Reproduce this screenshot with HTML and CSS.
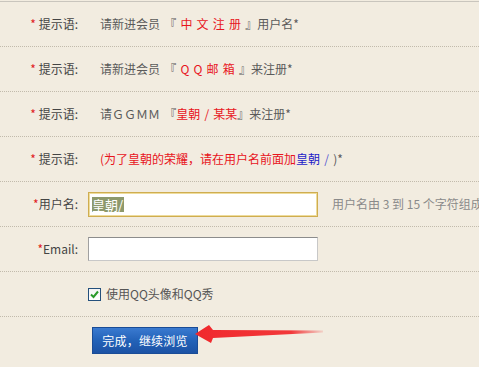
FILE: index.html
```html
<!DOCTYPE html>
<html lang="zh">
<head>
<meta charset="utf-8">
<link rel="stylesheet" href="styles.css">
</head>
<body>
<div class="page">
  <div class="topline"></div>
  <div class="form">
    <div class="row">
      <div class="label"><span class="req">*</span> 提示语:</div>
      <div class="value text">请新进会员 『 <span class="red">中 文 注 册</span> 』用户名*</div>
    </div>
    <div class="row">
      <div class="label"><span class="req">*</span> 提示语:</div>
      <div class="value text">请新进会员 『 <span class="red">Q Q 邮 箱</span> 』来注册*</div>
    </div>
    <div class="row">
      <div class="label"><span class="req">*</span> 提示语:</div>
      <div class="value text">请ＧＧＭＭ 『<span class="red">皇朝 / 某某</span>』来注册*</div>
    </div>
    <div class="row">
      <div class="label"><span class="req">*</span> 提示语:</div>
      <div class="value text"><span class="red">(为了皇朝的荣耀，请在用户名前面加</span><span class="blue">皇朝</span><span class="slash"> / </span>)*</div>
    </div>
    <div class="row">
      <div class="label"><span class="req">*</span>用户名:</div>
      <div class="value field">
        <div class="input focus"><span class="sel">皇朝/</span></div>
        <span class="hint">用户名由 3 到 15 个字符组成</span>
      </div>
    </div>
    <div class="row">
      <div class="label"><span class="req">*</span>Email:</div>
      <div class="value field">
        <div class="input plain"></div>
      </div>
    </div>
    <div class="row">
      <div class="label"></div>
      <div class="value check">
        <span class="box"><svg width="11" height="11" viewBox="0 0 11 11"><path d="M2 5.5 L4.5 8 L9 2.5" fill="none" stroke="#2a9a2a" stroke-width="2"/></svg></span>
        <span class="checklabel">使用QQ头像和QQ秀</span>
      </div>
    </div>
    <div class="row last">
      <div class="label"></div>
      <div class="value submit">
        <span class="btn">完成，继续浏览</span>
      </div>
    </div>
  </div>
  <svg class="arrow" width="140" height="30" viewBox="190 318 140 30">
    <defs>
      <linearGradient id="fade" x1="0" y1="0" x2="1" y2="0">
        <stop offset="0" stop-color="#f0282c"/>
        <stop offset="0.75" stop-color="#f2383a"/>
        <stop offset="1" stop-color="#f2383a" stop-opacity="0.15"/>
      </linearGradient>
    </defs>
    <polygon points="195,333 209,324 213,329 323,329.5 323,331.5 213,337 211,342" fill="url(#fade)"/>
  </svg>
</div>
</body>
</html>
```

FILE: styles.css
```css
html, body {
  margin: 0;
  padding: 0;
}
body {
  background: #f2ece0;
  font-family: "Noto Sans CJK SC", "Liberation Sans", sans-serif;
  font-size: 12px;
  color: #555;
  width: 479px;
  height: 367px;
  overflow: hidden;
}
.page {
  position: relative;
  height: 367px;
}
.topline {
  margin-top: 1px;
  border-top: 1px solid #c9c5bd;
}
.row {
  display: grid;
  grid-template-columns: 78px 1fr;
  column-gap: 10px;
  align-items: center;
  height: 44px;
  border-bottom: 1px dotted #c2bbac;
}
.row.last {
  border-bottom: none;
  height: 50px;
  align-items: start;
}
.label {
  text-align: right;
  color: #444;
  white-space: nowrap;
  line-height: 16px;
}
.req {
  color: #e02020;
}
.value {
  white-space: nowrap;
  line-height: 16px;
}
.text {
  padding-left: 12px;
  color: #5a5a5a;
  word-spacing: 1.5px;
}
.red {
  color: #e8141c;
}
.blue {
  color: #1f22c8;
}
.slash {
  color: #5a5ad0;
}
.field {
  display: flex;
  align-items: center;
  overflow: hidden;
}
.input {
  flex: none;
  width: 230px;
  height: 24px;
  box-sizing: border-box;
  background: #fff;
  display: flex;
  align-items: center;
  padding-left: 3px;
}
.input.focus {
  border: 1px solid #cfad50;
  box-shadow: inset 0 0 0 1px #eedc9c;
  height: 25px;
}
.input.plain {
  border: 1px solid #c8c8c8;
  border-top-color: #8c8c8c;
  border-left-color: #a0a0a0;
}
.sel {
  background: #8d996c;
  color: #fff;
  font-size: 13px;
  line-height: 15px;
  padding-right: 1px;
}
.hint {
  margin-left: 14px;
  color: #8a8a8a;
}
.check {
  display: flex;
  align-items: center;
  gap: 5px;
}
.box {
  width: 11px;
  height: 11px;
  border: 1px solid #24507c;
  background: linear-gradient(#f4f4f4, #ffffff);
  display: flex;
}
.checklabel {
  color: #555;
}
.submit {
  padding-top: 10px;
  padding-left: 4px;
}
.btn {
  display: inline-flex;
  align-items: center;
  justify-content: center;
  width: 106px;
  height: 27px;
  box-sizing: border-box;
  color: #fff;
  background: linear-gradient(#3a7ad0, #2362b8 50%, #1c52a4);
  border: 1px solid #1a4c96;
  letter-spacing: 0.2px;
}
.arrow {
  position: absolute;
  left: 190px;
  top: 318px;
}
```
